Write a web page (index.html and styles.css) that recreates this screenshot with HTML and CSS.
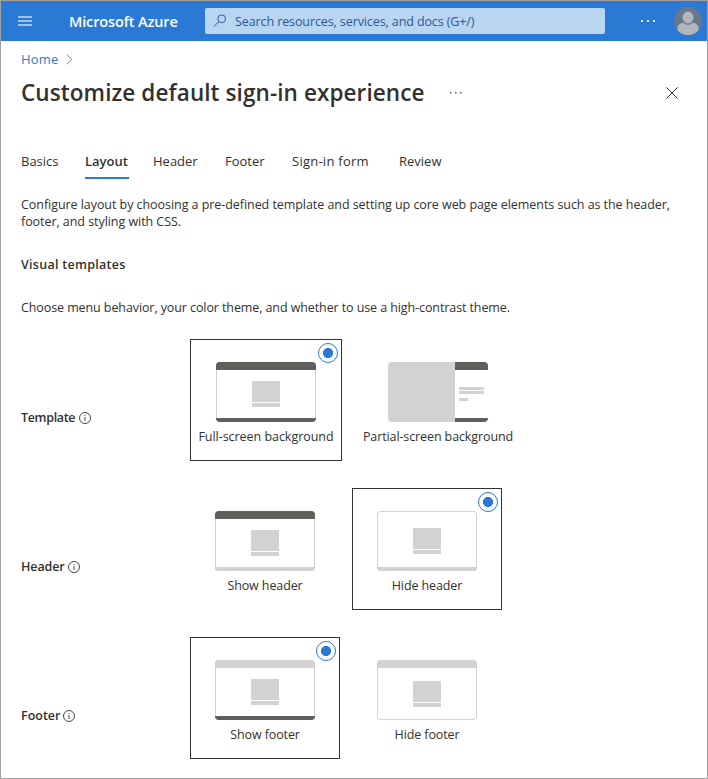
FILE: index.html
```html
<!DOCTYPE html>
<html lang="en">
<head>
<meta charset="utf-8">
<title>Customize default sign-in experience</title>
<link rel="stylesheet" href="styles.css">
</head>
<body>
<div class="portal">
  <header class="topbar">
    <svg class="menu" width="14" height="10" viewBox="0 0 14 10"><path d="M0 1h14M0 5h14M0 9h14"/></svg>
    <span class="brand">Microsoft Azure</span>
    <div class="search">
      <svg class="search-icon" width="14" height="14" viewBox="0 0 14 14"><circle cx="8.700" cy="4.800" r="3.900"/><path d="M5.900 7.600L.7 12.600"/></svg>
      <span class="search-text">Search resources, services, and docs (G+/)</span>
    </div>
    <svg class="more" width="16" height="2" viewBox="0 0 16 2"><path d="M0 0h2v2H0zM6 0h2v2H6zM12 0h2v2h-2z"/></svg>
    <svg class="avatar" width="28" height="28" viewBox="0 0 28 28">
      <defs><clipPath id="disc"><circle cx="14" cy="14" r="14"/></clipPath></defs>
      <g clip-path="url(#disc)"><rect width="28" height="28" fill="#68788c"/><path d="M3.500 28v-6.500c0-3.500 2.500-5.500 6-5.500 1.500 1.300 3 1.800 4.600 1.800s3-.5 4.500-1.800c3.500 0 6 2 6 5.500V28z" fill="#b3b7bc"/><ellipse cx="14" cy="10.500" rx="5.700" ry="6.300" fill="#b3b7bc" stroke="#68788c" stroke-width=".6"/></g>
    </svg>
  </header>
  <main class="content">
    <nav class="crumbs"><a class="home">Home</a><svg width="7" height="11" viewBox="0 0 7 11"><path d="M.8.6l5 4.900-5 4.900"/></svg></nav>
    <div class="heading">
      <h1>Customize default sign-in experience</h1>
      <svg class="title-more" width="12" height="2" viewBox="0 0 12 2"><path d="M0 0h1.500v1.500H0zM5 0h1.500v1.500H5zM10 0h1.500v1.500H10z"/></svg>
      <svg class="close" width="12" height="12" viewBox="0 0 12 12"><path d="M.3.3l11.400 11.400M11.700.3L.3 11.700"/></svg>
    </div>
    <div class="tabs">
      <span class="tab">Basics</span><span class="tab active">Layout</span><span class="tab">Header</span><span class="tab">Footer</span><span class="tab form">Sign-in form</span><span class="tab">Review</span>
    </div>
    <p class="intro">Configure layout by choosing a pre-defined template and setting up core web page elements such as the header,<br>footer, and styling with CSS.</p>
    <h2>Visual templates</h2>
    <p class="hint">Choose menu behavior, your color theme, and whether to use a high-contrast theme.</p>

    <section class="row">
      <div class="label"><span class="l-template">Template</span><svg class="info" width="12" height="12" viewBox="0 0 12 12"><circle cx="6" cy="6" r="5.500"/><path d="M6 5v4M6 3v1.100"/></svg></div>
      <div class="card selected full">
        <i class="radio"></i>
        <div class="thumb"><div class="bar top dark"></div><div class="box"></div><div class="line"></div><div class="bar bottom dark"></div></div>
        <span class="name n-full">Full-screen background</span>
      </div>
      <div class="card partial">
        <div class="thumb split">
          <div class="image"></div>
          <div class="pane"><div class="bar top dark"></div><div class="stripes"><i></i><i></i><i></i></div><div class="bar bottom dark"></div></div>
        </div>
        <span class="name">Partial-screen background</span>
      </div>
    </section>

    <section class="row">
      <div class="label"><span class="l-header">Header</span><svg class="info" width="12" height="12" viewBox="0 0 12 12"><circle cx="6" cy="6" r="5.500"/><path d="M6 5v4M6 3v1.100"/></svg></div>
      <div class="card">
        <div class="thumb"><div class="bar top dark"></div><div class="box"></div><div class="line"></div><div class="bar bottom"></div></div>
        <span class="name">Show header</span>
      </div>
      <div class="card selected">
        <i class="radio"></i>
        <div class="thumb no-header"><div class="box"></div><div class="line"></div><div class="bar bottom"></div></div>
        <span class="name">Hide header</span>
      </div>
    </section>

    <section class="row">
      <div class="label"><span class="l-footer">Footer</span><svg class="info" width="12" height="12" viewBox="0 0 12 12"><circle cx="6" cy="6" r="5.500"/><path d="M6 5v4M6 3v1.100"/></svg></div>
      <div class="card selected">
        <i class="radio"></i>
        <div class="thumb"><div class="bar top"></div><div class="box"></div><div class="line"></div><div class="bar bottom dark"></div></div>
        <span class="name">Show footer</span>
      </div>
      <div class="card">
        <div class="thumb no-footer"><div class="bar top"></div><div class="box"></div><div class="line"></div></div>
        <span class="name">Hide footer</span>
      </div>
    </section>
  </main>
</div>
</body>
</html>
```
FILE: styles.css
```css
* { box-sizing: border-box; }
body {
  margin: 0;
  font: 12.5px/17px "Open Sans", "Noto Sans", sans-serif;
  color: #323130;
  background: #fff;
}
svg { display: block; flex: none; }
span, h1, h2, p { white-space: nowrap; }

.portal { width: 708px; height: 779px; border: 1px solid #a0a0a0; overflow: hidden; }

.topbar { display: flex; align-items: center; height: 40px; padding: 0 5px 0 17px; background: #2979d5; }
.menu { stroke: #9cc3ee; stroke-width: 2; }
.brand { width: 136px; margin-left: 37px; font-size: 14.5px; font-weight: 600; letter-spacing: -.14px; color: #fff; }
.search { display: flex; align-items: center; width: 400px; height: 26px; padding-left: 8px; border-radius: 2px; background: #b8d6f2; color: #2b5797; }
.search-icon { fill: none; stroke: #2b5a99; stroke-width: 1; }
.search-text { margin-left: 8px; letter-spacing: -.1px; }
.more { margin-left: 36px; fill: #dcebfa; }
.avatar { margin-left: auto; }

.content { padding: 0 20px; }
.crumbs { display: flex; align-items: center; gap: 8px; height: 20px; margin-top: 8px; }
.crumbs svg { fill: none; stroke: #8a8886; margin-top: 1px; }
.home { color: #2979d5; font-size: 13px; letter-spacing: .15px; }
.heading { display: flex; align-items: center; height: 36px; margin-top: 6px; }
h1 { width: 429px; margin: 0; font-size: 22.5px; line-height: 32px; font-weight: 600; letter-spacing: .09px; }
.title-more { fill: #605e5c; }
.close { margin: 0 9px 0 auto; stroke: #323130; fill: none; }

.tabs { display: grid; grid-template-columns: 64px 68px 72px 67px 107px auto; height: 29px; margin-top: 40px; font-size: 13px; line-height: 20px; }
.active { width: 44px; height: 28px; font-weight: 600; border-bottom: 2px solid #2979d5; }
.form { letter-spacing: .25px; }
.intro { margin: 16px 0 0; letter-spacing: -.055px; }
h2 { margin: 26px 0 0; font-size: 12.5px; line-height: 17px; font-weight: 600; letter-spacing: .28px; }
.hint { margin: 26px 0 23px; letter-spacing: -.095px; }

.row { display: flex; height: 122px; margin-bottom: 27px; }
.label { display: flex; align-items: center; gap: 3px; width: 169px; height: 17px; margin-top: 70px; font-weight: 600; }
.l-template { width: 55px; letter-spacing: -.33px; }
.l-header { width: 44px; letter-spacing: -.1px; }
.l-footer { width: 39px; }
.info { fill: none; stroke: #484644; stroke-width: 1; margin-top: 1px; }
.card { position: relative; display: flex; flex-direction: column; align-items: center; width: 150px; height: 122px; padding-top: 22px; border: 1px solid transparent; }
.card + .card { margin-left: 12px; }
.full { width: 152px; }
.partial { width: 168px; }
.selected { border-color: #323130; }
.radio { position: absolute; top: 3px; right: 3px; width: 20px; height: 20px; border: 1px solid #2979d5; border-radius: 50%; background: radial-gradient(circle, #2979d5 4.800px, #fff 5.300px); }

.thumb { display: flex; flex-direction: column; align-items: center; width: 100px; height: 60px; border-radius: 4px; overflow: hidden; box-shadow: inset 0 0 0 1px #d2d2d2; }
.bar { width: 100%; background: #d2d2d2; flex: none; }
.top { height: 8px; }
.bottom { height: 4px; margin-top: auto; }
.dark { background: #605e5a; }
.box { width: 28px; height: 21px; margin-top: 11px; background: #d2d2d2; }
.line { width: 28px; height: 4px; margin-top: 1px; background: #d2d2d2; }
.no-header .box { margin-top: 17px; }
.no-footer .box { margin-top: 13px; }
.split { flex-direction: row; box-shadow: none; }
.image { width: 67px; height: 60px; background: #d2d2d2; }
.pane { display: flex; flex-direction: column; width: 33px; height: 60px; }
.stripes { display: flex; flex-direction: column; gap: 1px; padding: 17px 4px 0; }
.stripes i { width: 25px; height: 3px; background: #d2d2d2; }
.stripes i:last-child { width: 9px; margin-top: 3px; }
.name { margin-top: 6px; letter-spacing: -.11px; }
.n-full { letter-spacing: -.04px; }
```
